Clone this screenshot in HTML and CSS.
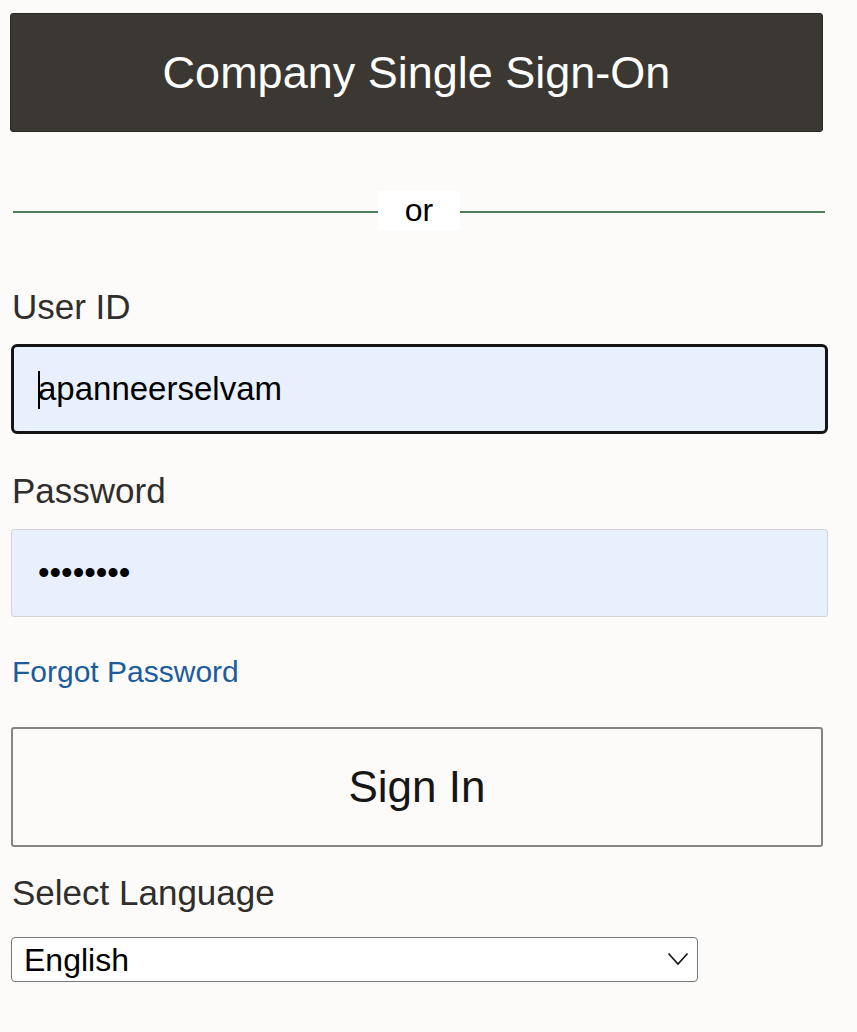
FILE: index.html
```html
<!DOCTYPE html>
<html lang="en">
<head>
<meta charset="utf-8">
<title>Sign In</title>
<link rel="stylesheet" href="styles.css">
</head>
<body>
<main class="login">
  <button class="sso-btn" type="button">Company Single Sign-On</button>
  <div class="divider"><span class="divider-text">or</span></div>
  <label class="field-label" for="userid">User ID</label>
  <div class="input-wrap">
    <input class="text-input focused" id="userid" type="text" value="apanneerselvam">
    <span class="caret"></span>
  </div>
  <label class="field-label label-pw" for="pw">Password</label>
  <input class="text-input pw-input" id="pw" type="password" value="abcdefgh">
  <a class="forgot" href="#">Forgot Password</a>
  <button class="signin-btn" type="button">Sign In</button>
  <label class="field-label label-lang" for="lang">Select Language</label>
  <div class="select-wrap">
    <select class="lang-select" id="lang">
      <option>English</option>
    </select>
    <svg class="chev" width="22" height="14" viewBox="0 0 22 14"><path d="M1.5 1.5 L11 12 L20.5 1.5" fill="none" stroke="#111" stroke-width="1.6"/></svg>
  </div>
</main>
</body>
</html>
```

FILE: styles.css
```css
html, body {
  margin: 0;
  padding: 0;
  background: #fcfbf9;
}
body {
  font-family: "Liberation Sans", Arial, sans-serif;
  color: #333;
}
.login {
  display: flex;
  flex-direction: column;
  align-items: flex-start;
  padding: 13px 0 0 10px;
  width: 820px;
}
.sso-btn {
  width: 813px;
  height: 119px;
  background: #3b3733;
  color: #fff;
  border: 1px solid #2a2724;
  border-radius: 3px;
  font-family: "Liberation Sans", Arial, sans-serif;
  font-size: 45px;
  padding: 0;
  cursor: pointer;
}
.divider {
  width: 812px;
  margin: 59px 0 0 3px;
  height: 39px;
  display: flex;
  align-items: center;
}
.divider::before,
.divider::after {
  content: "";
  flex: 1;
  height: 1.5px;
  background: #4e7d58;
  margin-top: 3px;
}
.divider-text {
  width: 82px;
  height: 39px;
  background: #fff;
  color: #000;
  font-size: 32px;
  line-height: 39px;
  text-align: center;
}
.field-label {
  font-size: 35px;
  line-height: 39px;
  color: #2f2e2c;
  margin: 57px 0 0 2px;
}
.label-pw { margin-top: 37px; }
.label-lang { margin-top: 26px; }
.input-wrap {
  position: relative;
  margin-top: 18px;
  margin-left: 1px;
}
.text-input {
  box-sizing: border-box;
  width: 817px;
  font-family: "Liberation Sans", Arial, sans-serif;
  font-size: 33px;
  color: #000;
  background: #e8f0fe;
  outline: none;
}
.focused {
  height: 90px;
  border: 3px solid #151515;
  border-radius: 6px;
  padding: 0 0 0 24px;
}
.caret {
  position: absolute;
  left: 27px;
  top: 27px;
  width: 1.5px;
  height: 38px;
  background: #000;
}
.pw-input {
  height: 88px;
  margin: 19px 0 0 1px;
  border: 1px solid #d4d4d4;
  border-radius: 3px;
  padding: 0 0 0 26px;
  font-size: 33px;
}
.forgot {
  font-size: 30px;
  line-height: 35px;
  color: #1b5c9c;
  text-decoration: none;
  margin: 37px 0 0 2px;
}
.signin-btn {
  width: 812px;
  height: 120px;
  margin: 38px 0 0 1px;
  background: transparent;
  border: 2px solid #848484;
  border-radius: 3px;
  font-family: "Liberation Sans", Arial, sans-serif;
  font-size: 44px;
  color: #161616;
  padding: 0;
}
.select-wrap {
  position: relative;
  margin: 25px 0 0 1px;
}
.lang-select {
  appearance: none;
  -webkit-appearance: none;
  box-sizing: border-box;
  width: 687px;
  height: 45px;
  border: 1px solid #777;
  border-radius: 4px;
  background: #fff;
  font-family: "Liberation Sans", Arial, sans-serif;
  font-size: 32px;
  color: #000;
  padding: 0 0 0 12px;
}
.chev {
  position: absolute;
  right: 9px;
  top: 15px;
  pointer-events: none;
}
```
